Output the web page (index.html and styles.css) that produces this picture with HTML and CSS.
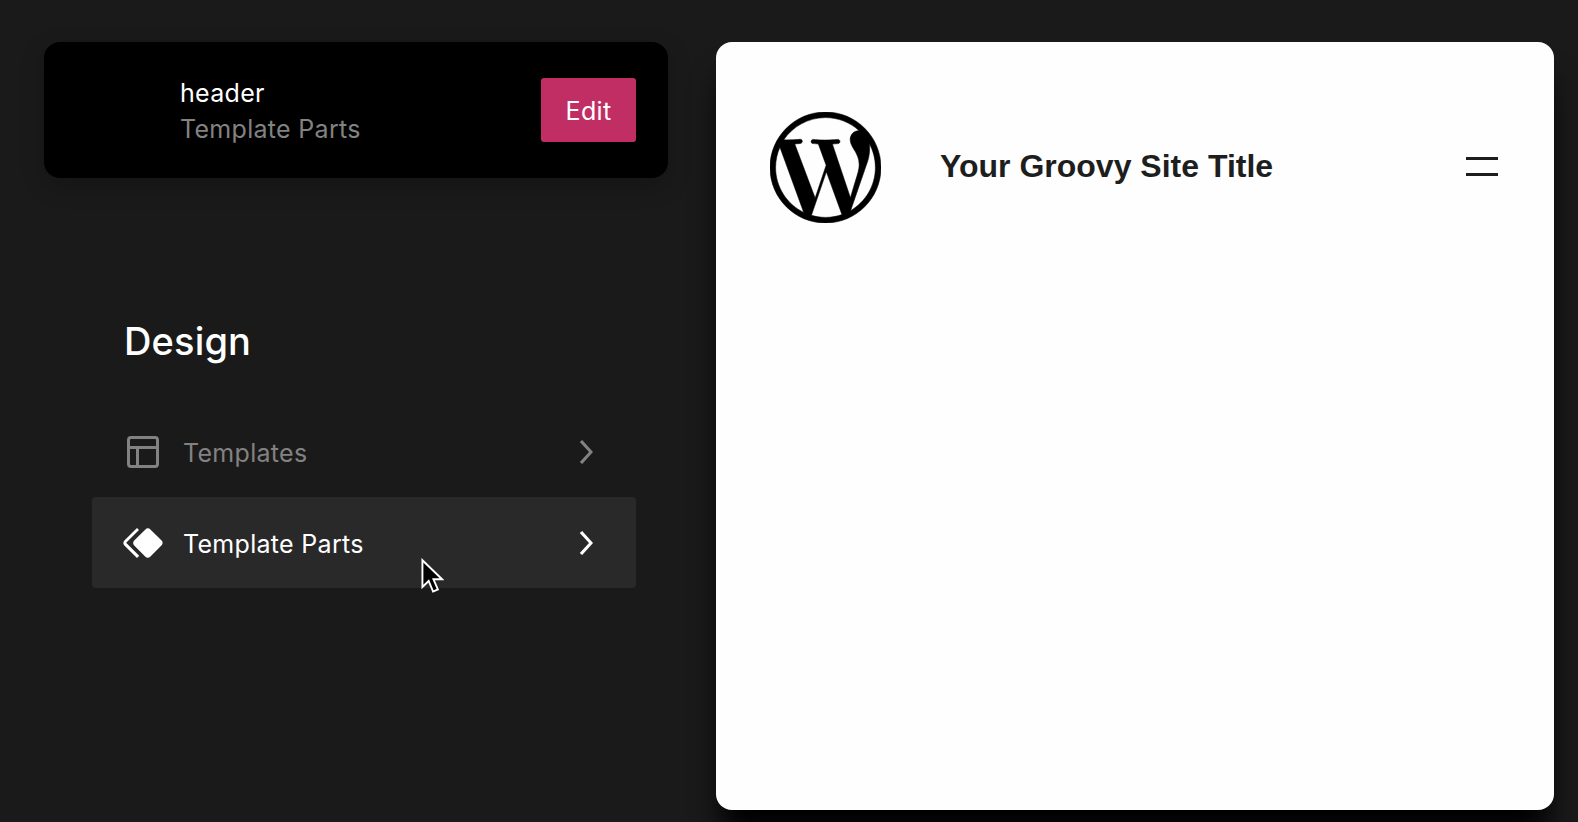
FILE: index.html
```html
<!DOCTYPE html>
<html lang="en">
<head>
  <meta charset="UTF-8">
  <title>Design</title>
  <link rel="stylesheet" href="styles.css">
</head>
<body>
  <div class="sidebar">
    <div class="part-card">
      <div class="part-info">
        <div class="part-name">header</div>
        <div class="part-type">Template Parts</div>
      </div>
      <button class="edit-btn">Edit</button>
    </div>
    <div class="design-nav">
      <h1 class="nav-title">Design</h1>
      <div class="nav-item">
        <svg class="nav-icon" viewBox="0 0 24 24"><path d="M18 5.5H6a.5.5 0 00-.5.5v3h13V6a.5.5 0 00-.5-.5zm.5 5H10v8h8a.5.5 0 00.5-.5v-7.5zm-10 0h-3V18a.5.5 0 00.5.5h2.5v-8zM6 4h12a2 2 0 012 2v12a2 2 0 01-2 2H6a2 2 0 01-2-2V6a2 2 0 012-2z"/></svg>
        <span class="nav-label">Templates</span>
        <svg class="nav-chevron" viewBox="0 0 24 24"><path d="M10.6 6L9.4 7l4.6 5-4.6 5 1.2 1 5.4-6z"/></svg>
      </div>
      <div class="nav-item active">
        <svg class="nav-icon" viewBox="0 0 24 24"><path d="M21.3 10.8l-5.6-5.6c-.7-.7-1.8-.7-2.5 0l-5.6 5.6c-.7.7-.7 1.8 0 2.5l5.6 5.6c.3.3.8.5 1.2.5s.9-.2 1.2-.5l5.6-5.6c.8-.7.8-1.9.1-2.5zm-17.6 1L10 5.5l-1-1-6.3 6.3c-.7.7-.7 1.8 0 2.5L9 19.5l1.1-1.1-6.3-6.3c-.2 0-.2-.2-.1-.3z"/></svg>
        <span class="nav-label">Template Parts</span>
        <svg class="nav-chevron" viewBox="0 0 24 24"><path d="M10.6 6L9.4 7l4.6 5-4.6 5 1.2 1 5.4-6z"/></svg>
      </div>
    </div>
  </div>
  <div class="preview">
    <div class="site-header">
      <svg class="site-logo" viewBox="0 0 24 24"><path d="M21.469 6.825c.84 1.537 1.318 3.3 1.318 5.175 0 3.979-2.156 7.456-5.363 9.325l3.295-9.527c.615-1.54.82-2.771.82-3.864 0-.405-.026-.78-.07-1.11m-7.981.105c.647-.03 1.232-.105 1.232-.105.582-.075.514-.93-.067-.899-1.755.135-2.88.134-2.88.134-.9 0-2.4-.135-2.4-.135-.6-.03-.66.855-.06.885 0 0 .54.075 1.14.105l1.68 4.605-2.37 7.08L5.354 6.9c.649-.03 1.234-.1 1.234-.1.58-.075.51-.93-.065-.896 0 0-1.746.138-2.87.138-.2 0-.438-.008-.69-.015C4.911 3.15 8.235 1.215 12 1.215c2.809 0 5.365 1.072 7.286 2.833-.046-.003-.091-.009-.141-.009-1.06 0-1.812.923-1.812 1.914 0 .89.513 1.643 1.06 2.531.411.72.89 1.643.89 2.977 0 .915-.354 1.994-.821 3.479l-1.075 3.585-3.9-11.61.001.014zM12 22.784c-1.059 0-2.081-.153-3.048-.437l3.237-9.406 3.315 9.087c.024.053.05.101.078.149-1.12.393-2.325.609-3.582.609M1.211 12c0-1.564.336-3.05.935-4.39L7.29 21.709C3.694 19.96 1.212 16.271 1.211 12M12 0C5.385 0 0 5.385 0 12s5.385 12 12 12 12-5.385 12-12S18.615 0 12 0"/></svg>
      <div class="site-title">Your Groovy Site Title</div>
      <div class="site-menu"><span></span><span></span></div>
    </div>
  </div>
  <svg class="cursor" viewBox="0 0 24 36"><path d="M1.5 1.5v28l6.5-6.3 4.6 11 5-2.2-4.6-10.6h9z"/></svg>
</body>
</html>
```

FILE: styles.css
```css
html, body {
  margin: 0; padding: 0;
  height: 100%;
  overflow: hidden;
}
body {
  display: flex;
  gap: 48px;
  box-sizing: border-box;
  padding: 42px 24px 12px 44px;
  background: #1a1a1a;
  font-family: Inter, 'Noto Sans', sans-serif;
}
.sidebar { width: 624px; flex: none; }
.part-card {
  display: flex; align-items: center; justify-content: space-between;
  height: 136px; box-sizing: border-box;
  padding: 0 32px 0 136px;
  background: #000; border-radius: 16px;
  box-shadow: 0 8px 24px #0003;
}
.part-info { padding-top: 2px; }
.part-name { color: #fff; font-size: 25px; line-height: 36px; letter-spacing: .3px; }
.part-type { color: #828282; font-size: 25px; line-height: 36px; letter-spacing: .3px; }
.edit-btn {
  width: 95px; height: 64px;
  padding: 2px 0 0;
  background: #c12e63; color: #fff;
  border: none; border-radius: 3px;
  font: 25px Inter, sans-serif;
  letter-spacing: .3px;
}
.design-nav { margin: 0 32px 0 48px; padding-top: 140px; }
.nav-title {
  margin: 0 0 42px 32px;
  color: #fff; font-size: 38px; line-height: 46px; font-weight: 500;
  letter-spacing: .15px;
}
.nav-item {
  display: flex; align-items: center;
  height: 91px; padding: 0 27px 0 27px;
  color: #828282; fill: #828282;
  border-radius: 4px;
}
.nav-item.active { background: #292929; color: #fff; fill: #fff; }
.nav-icon { width: 48px; height: 48px; flex: none; }
.nav-label { flex: 1; margin-left: 16px; padding-top: 2px; font-size: 25px; letter-spacing: .3px; }
.nav-chevron { width: 48px; height: 48px; flex: none; }
.preview {
  flex: 1; height: 768px;
  background: #fefefe; border-radius: 16px;
  box-shadow: 0 30px 30px -6px #000;
}
.site-header {
  display: flex; align-items: center;
  padding: 70px 56px 0 54px;
}
.site-logo { width: 111px; height: 111px; flex: none; stroke: #000; stroke-width: .12; }
.site-title {
  flex: 1; margin: 0 0 3px 59px;
  color: #1e1e1e;
  font: bold 32px 'Liberation Sans', sans-serif;
}
.site-menu { display: flex; flex-direction: column; gap: 13px; margin-bottom: 3px; }
.site-menu span { display: block; width: 32px; height: 3px; background: #1e1e1e; }
.cursor {
  position: absolute; left: 421px; top: 558px;
  width: 23px; height: 36px;
  fill: #000; stroke: #fff; stroke-width: 2;
}
```
